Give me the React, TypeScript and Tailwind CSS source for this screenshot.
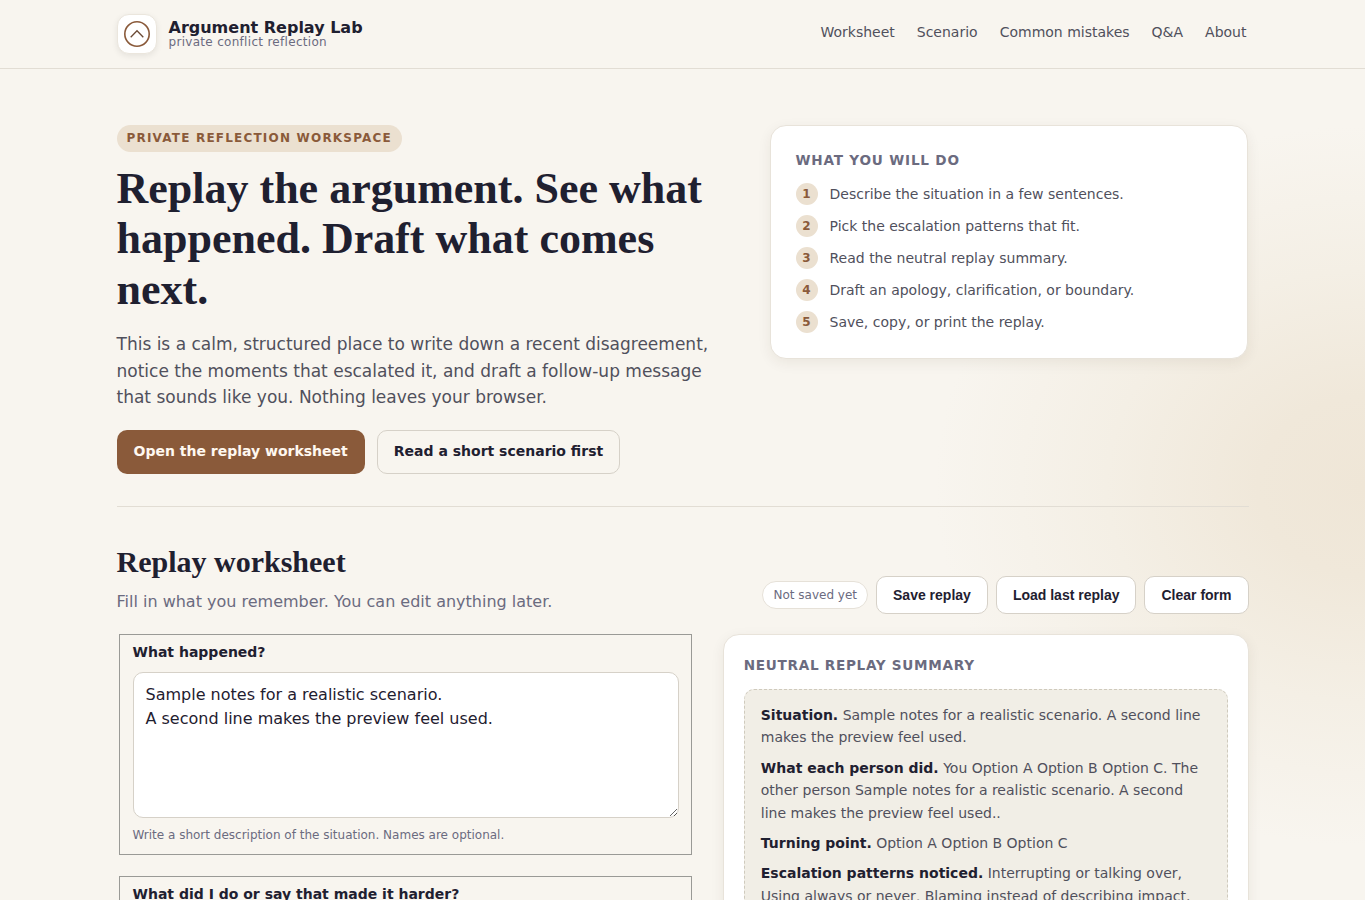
import React from 'react';

const NAV = ['Worksheet', 'Scenario', 'Common mistakes', 'Q&A', 'About'];

const STEPS = [
    'Describe the situation in a few sentences.',
    'Pick the escalation patterns that fit.',
    'Read the neutral replay summary.',
    'Draft an apology, clarification, or boundary.',
    'Save, copy, or print the replay.',
];

const SUMMARY = [
    ['Situation.', 'Sample notes for a realistic scenario. A second line makes the preview feel used.'],
    ['What each person did.', 'You Option A Option B Option C. The other person Sample notes for a realistic scenario. A second line makes the preview feel used..'],
    ['Turning point.', 'Option A Option B Option C'],
    ['Escalation patterns noticed.', 'Interrupting or talking over, Using always or never, Blaming instead of describing impact.'],
];

const SAMPLE = 'Sample notes for a realistic scenario.\nA second line makes the preview feel used.';

const ToolButton: React.FC<{ label: string }> = ({ label }) => (
    <button className="h-[38px] px-4 pt-[1px] rounded-[10px] border border-[#d6d1c8] bg-white text-[14px] font-bold text-[#1f2030] font-['Liberation_Sans',sans-serif]">
        {label}
    </button>
);

const Field: React.FC<{ label: string; hint: string }> = ({ label, hint }) => (
    <fieldset className="ml-[2px] mr-[2.5px] border border-[#9a9a96] pl-[13px] pr-[12.4px] pt-[7px] pb-[10px]">
        <label className="block text-[14px] leading-[20px] font-bold text-[#1f2030]">{label}</label>
        <textarea
            readOnly
            defaultValue={SAMPLE}
            className="block w-full h-[146px] mt-[10px] px-3 py-[10px] rounded-[10px] border border-[#d6d1c8] bg-white text-[16px] leading-[24px] text-[#1f2030] outline-none"
        />
        <p className="mt-[8px] text-[12px] leading-[18px] text-[#6b6b7f]">{hint}</p>
    </fieldset>
);

export default function App() {
    return (
        <div className="min-h-screen font-['DejaVu_Sans',sans-serif] text-[#1f2030] bg-[#f8f5ef] bg-[radial-gradient(ellipse_430px_360px_at_100%_54%,#efe6d7_0%,#f0e8da_25%,#f4efe5_60%,#f8f5ef_100%)] bg-fixed">
            <header className="h-[69px] border-b border-[#e2ddd4]">
                <div className="w-[1132px] mx-auto h-full flex items-center justify-between">
                    <div className="flex items-center gap-3">
                        <div className="w-10 h-10 rounded-xl bg-white border border-[#ebe6dd] shadow-[0_2px_6px_rgba(0,0,0,0.08)] flex items-center justify-center">
                            <svg width="28" height="28" viewBox="0 0 28 28" fill="none">
                                <circle cx="14" cy="14" r="12.2" stroke="#8a5a3a" strokeWidth="1.6" />
                                <path d="M7.7 17.3 14 10.7l6.3 6.6" stroke="#6b4a35" strokeWidth="1.3" />
                            </svg>
                        </div>
                        <div>
                            <div className="text-[16px] leading-[16px] font-bold">Argument Replay Lab</div>
                            <div className="text-[12px] leading-[12px] tracking-[0.3px] text-[#6b6b7f]">private conflict reflection</div>
                        </div>
                    </div>
                    <nav className="flex gap-[22px] pb-1 pr-[2px] text-[14px] text-[#50505c]">
                        {NAV.map((item) => (
                            <a key={item}>{item}</a>
                        ))}
                    </nav>
                </div>
            </header>

            <main className="w-[1132px] mx-auto">
                <section className="grid grid-cols-[1fr_479px] gap-[34px] pt-14 pb-8 border-b border-[#e2ddd4]">
                    <div>
                        <span className="inline-block h-[27px] px-[10px] rounded-full bg-[#ebe0d0] text-[12px] leading-[27px] font-bold tracking-[1.2px] text-[#8a5a3a]">
                            PRIVATE REFLECTION WORKSPACE
                        </span>
                        <h1 className="mt-[11.7px] font-['Liberation_Serif',serif] text-[44px] leading-[50.6px] font-bold">
                            Replay the argument. See what happened. Draft what comes next.
                        </h1>
                        <p className="mt-[15.8px] text-[17px] leading-[26.4px] text-[#50505c]">
                            This is a calm, structured place to write down a recent disagreement, notice the moments that escalated it, and draft a follow-up message that sounds like you. Nothing leaves your browser.
                        </p>
                        <div className="flex gap-3 mt-[19.5px]">
                            <a className="h-[44px] px-[17px] rounded-[10px] bg-[#8a5a3a] text-[14px] leading-[42px] font-bold text-[#fff8f0]">
                                Open the replay worksheet
                            </a>
                            <a className="h-[44px] px-4 rounded-[10px] border border-[#d6d1c8] text-[14px] leading-[40px] font-bold">
                                Read a short scenario first
                            </a>
                        </div>
                    </div>
                    <aside className="self-start h-[234px] mr-[1px] rounded-2xl bg-white border border-[#e8e3da] shadow-[0_4px_14px_rgba(60,40,20,0.07)] pl-[25px] pr-6 pt-[25px]">
                        <h2 className="text-[13.6px] leading-[18px] font-bold tracking-[0.8px] text-[#6b6b7f]">WHAT YOU WILL DO</h2>
                        <ol className="mt-[14px] flex flex-col gap-[10px]">
                            {STEPS.map((step, i) => (
                                <li key={step} className="flex items-center gap-3 h-[22px] text-[14px] text-[#50505c]">
                                    <span className="w-[22px] h-[22px] rounded-full bg-[#ebe0d0] text-[12px] font-bold text-[#8a5a3a] flex items-center justify-center">
                                        {i + 1}
                                    </span>
                                    {step}
                                </li>
                            ))}
                        </ol>
                    </aside>
                </section>

                <section className="pt-[37px]">
                    <div className="flex items-end justify-between">
                        <div>
                            <h2 className="font-['Liberation_Serif',serif] text-[30px] leading-[36px] font-bold">Replay worksheet</h2>
                            <p className="mt-[10px] text-[16px] leading-[24px] text-[#6b6b7f]">Fill in what you remember. You can edit anything later.</p>
                        </div>
                        <div className="flex items-center gap-2">
                            <span className="h-[28px] px-[10px] rounded-full border border-[#e6e1d8] bg-white text-[12px] leading-[26px] text-[#6b6b7f]">Not saved yet</span>
                            <ToolButton label="Save replay" />
                            <ToolButton label="Load last replay" />
                            <ToolButton label="Clear form" />
                        </div>
                    </div>

                    <div className="grid grid-cols-[1.1fr_1fr] gap-[28px] mt-[20px]">
                        <div className="flex flex-col gap-[21px]">
                            <Field label="What happened?" hint="Write a short description of the situation. Names are optional." />
                            <Field label="What did I do or say that made it harder?" hint="Describe your own part in plain words." />
                        </div>
                        <div className="self-start rounded-2xl bg-white border border-[#e8e3da] shadow-[0_4px_14px_rgba(60,40,20,0.07)] p-5">
                            <h2 className="text-[13.6px] leading-[20px] font-bold tracking-[0.7px] text-[#6b6b7f]">NEUTRAL REPLAY SUMMARY</h2>
                            <div className="mt-[14px] rounded-[10px] border border-dashed border-[#cfcabd] bg-[#f1eee6] px-4 pt-[14px] pb-4 flex flex-col gap-[8px] text-[14px] leading-[22.4px] text-[#50505c]">
                                {SUMMARY.map(([head, body]) => (
                                    <p key={head}>
                                        <strong className="text-[#1f2030]">{head}</strong> {body}
                                    </p>
                                ))}
                            </div>
                        </div>
                    </div>
                </section>
            </main>
        </div>
    );
}
